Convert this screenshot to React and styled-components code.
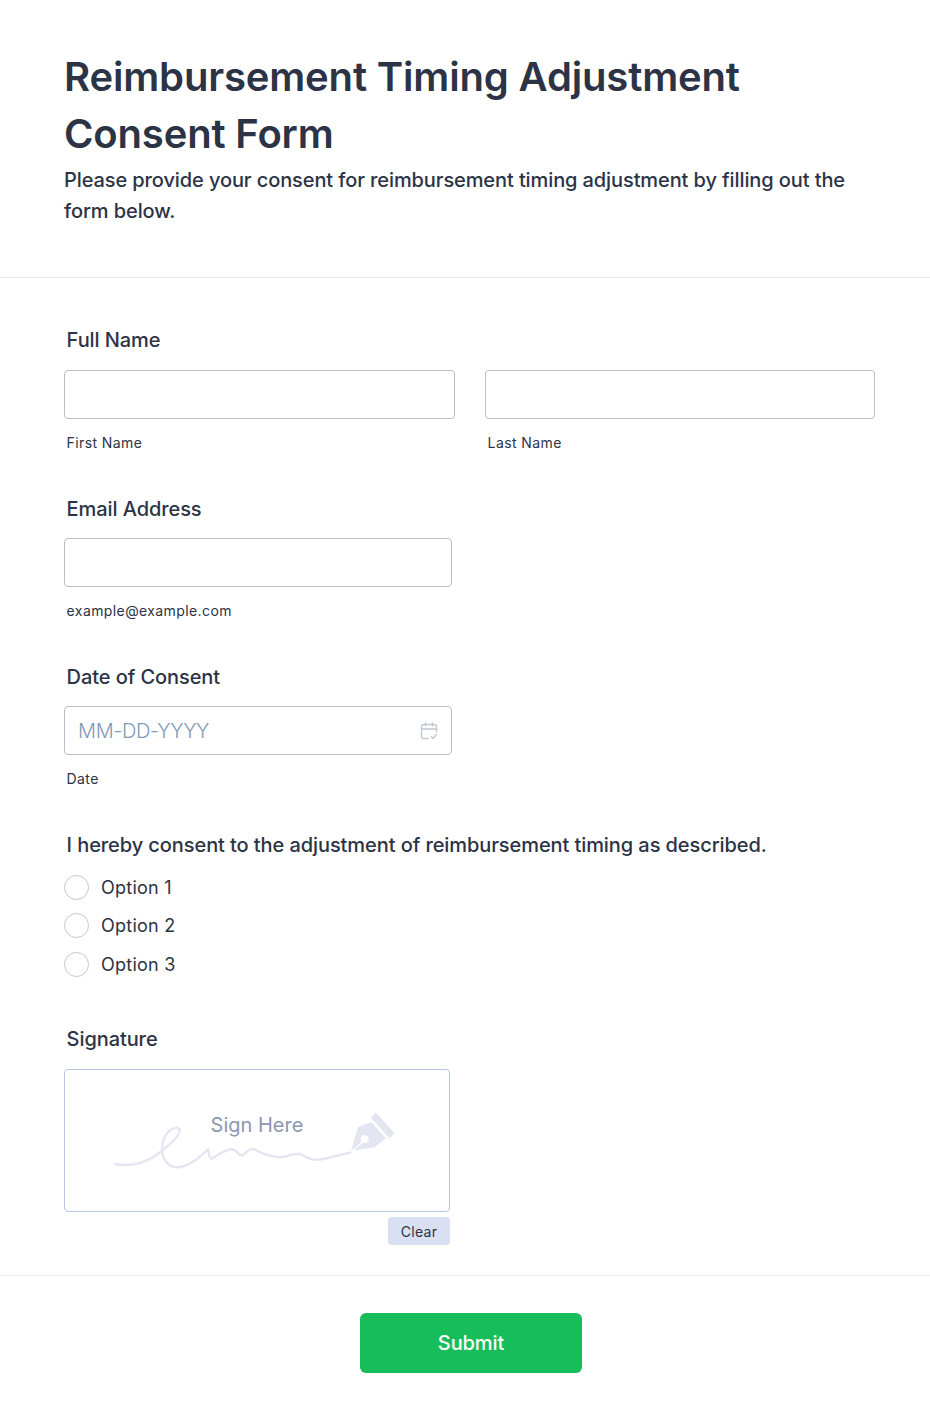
import React from "react";
import styled, { createGlobalStyle } from "styled-components";

const GlobalStyle = createGlobalStyle`
  html, body {
    margin: 0;
    padding: 0;
    background: #fff;
  }
  body {
    font-family: Inter, "Liberation Sans", sans-serif;
    color: #2c3345;
  }
  * {
    box-sizing: border-box;
  }
`;

const Page = styled.div`
  width: 930px;
  height: 1422px;
  background: #fff;
`;

const Header = styled.header`
  height: 278px;
  padding: 48px 64px 0;
  border-bottom: 1px solid #e3e5e8;
`;

const Title = styled.h1`
  margin: 0;
  font-size: 40px;
  font-weight: 600;
  line-height: 57px;
  letter-spacing: -0.16px;
  color: #2c3345;
`;

const Subtitle = styled.p`
  margin: 3px 0 0;
  font-size: 20px;
  font-weight: 500;
  line-height: 31px;
  letter-spacing: -0.1px;
  color: #2c3345;
`;

const Form = styled.form`
  display: flex;
  flex-direction: column;
  padding: 50px 55px 0 64px;
`;

const Field = styled.div`
  display: flex;
  flex-direction: column;
  margin-bottom: ${(p) => p.$bottom || 46}px;
`;

const Label = styled.label`
  display: block;
  margin: 0 0 ${(p) => p.$gap || 17}px 2.6px;
  font-size: 20px;
  font-weight: 500;
  line-height: 24px;
  letter-spacing: -0.08px;
  color: #2c3345;
`;

const InputRow = styled.div`
  display: grid;
  grid-template-columns: 391px 390px;
  column-gap: 30px;
`;

const Col = styled.div`
  display: flex;
  flex-direction: column;
  width: ${(p) => p.$width || "100%"};
`;

const InputBox = styled.div`
  display: flex;
  align-items: center;
  justify-content: space-between;
  height: 49px;
  padding: 0 13px;
  border: 1px solid #b8bdc9;
  border-radius: 4px;
  background: #fff;
`;

const Placeholder = styled.span`
  font-size: 20px;
  font-weight: 300;
  letter-spacing: -0.35px;
  color: #7f9ab5;
`;

const SubLabel = styled.span`
  margin: 16px 0 0 2.6px;
  font-size: 14px;
  line-height: 16px;
  letter-spacing: 0.4px;
  color: #2c3345;
`;

const Options = styled.div`
  display: flex;
  flex-direction: column;
  gap: 13.4px;
  margin-top: 1px;
`;

const Option = styled.div`
  display: flex;
  align-items: center;
  gap: 12px;
  height: 25px;
  font-size: 18px;
  letter-spacing: 0.25px;
  color: #2c3345;
`;

const Radio = styled.span`
  width: 25px;
  height: 25px;
  border: 1.5px solid #c3c8d4;
  border-radius: 50%;
  background: #fff;
`;

const SignBox = styled.div`
  position: relative;
  width: 386px;
  height: 143px;
  border: 1px solid #b8c8e4;
  border-radius: 4px;
  background: #fff;
`;

const SignText = styled.span`
  position: absolute;
  top: 42px;
  left: 0;
  right: 0;
  text-align: center;
  font-size: 20px;
  line-height: 26px;
  color: #8b97b3;
`;

const SignArt = styled.svg`
  position: absolute;
  left: 48px;
  top: 40px;
`;

const ClearRow = styled.div`
  display: flex;
  justify-content: flex-end;
  width: 386px;
  margin-top: 5px;
`;

const ClearButton = styled.button`
  width: 62px;
  height: 28px;
  padding: 2px 0 0;
  border: 0;
  border-radius: 4px;
  background: #d9e0f3;
  font-family: inherit;
  font-size: 14px;
  letter-spacing: 0.3px;
  color: #2c3345;
`;

const Footer = styled.div`
  display: flex;
  justify-content: center;
  margin-top: 30px;
  padding: 37px 0 0 12px;
  border-top: 1px solid #e8e8f5;
`;

const SubmitButton = styled.button`
  width: 222px;
  height: 60px;
  border: 0;
  border-radius: 6px;
  background: #18bd5b;
  font-family: inherit;
  font-size: 20px;
  font-weight: 500;
  letter-spacing: -0.1px;
  color: #fff;
`;

const CalendarIcon = () => (
  <svg width="18" height="18" viewBox="0 0 18 18" fill="none" stroke="#c0c8d4" strokeWidth="1.4" strokeLinecap="round" strokeLinejoin="round">
    <path d="M8 16.5H3.5A2 2 0 0 1 1.5 14.5V4.5A2 2 0 0 1 3.5 2.5H14.5A2 2 0 0 1 16.5 4.5V10" />
    <path d="M1.5 7H16.5" />
    <path d="M5.5 1V4M12.5 1V4" />
    <path d="M11 14.5L13 16.5L16.5 12.5" />
  </svg>
);

const SignatureArt = () => (
  <SignArt width="290" height="75" viewBox="190 150 870 225" fill="none">
    <path
      d="M197 312C240 320 285 310 320 285C360 255 395 225 390 208C380 195 350 210 340 245C330 290 350 322 385 322C420 320 450 290 475 268C478 280 478 298 488 295C505 285 530 265 550 268C565 272 565 290 580 285C595 275 600 262 615 268C640 285 670 290 690 292C710 292 730 278 750 282C775 295 790 302 815 298C850 292 880 282 903 277"
      stroke="#e3e6f1"
      strokeWidth="7"
      strokeLinecap="round"
    />
    <path d="M905 272L925 200L965 187L1008 235L975 262Z" fill="#e3e6f1" />
    <path d="M978 157L1035 220L1020 235L963 173Z" fill="#e3e6f1" />
    <circle cx="945" cy="237" r="12" fill="#fff" />
    <path d="M905 275L940 245" stroke="#fff" strokeWidth="4" />
  </SignArt>
);

export default function App() {
  return (
    <Page>
      <GlobalStyle />
      <Header>
        <Title>Reimbursement Timing Adjustment Consent Form</Title>
        <Subtitle>
          Please provide your consent for reimbursement timing adjustment by
          filling out the form below.
        </Subtitle>
      </Header>
      <Form>
        <Field>
          <Label $gap={18}>Full Name</Label>
          <InputRow>
            <Col>
              <InputBox />
              <SubLabel>First Name</SubLabel>
            </Col>
            <Col>
              <InputBox />
              <SubLabel>Last Name</SubLabel>
            </Col>
          </InputRow>
        </Field>
        <Field>
          <Label>Email Address</Label>
          <Col $width="388px">
            <InputBox />
            <SubLabel>example@example.com</SubLabel>
          </Col>
        </Field>
        <Field>
          <Label>Date of Consent</Label>
          <Col $width="388px">
            <InputBox>
              <Placeholder>MM-DD-YYYY</Placeholder>
              <CalendarIcon />
            </InputBox>
            <SubLabel>Date</SubLabel>
          </Col>
        </Field>
        <Field $bottom={50}>
          <Label>I hereby consent to the adjustment of reimbursement timing as described.</Label>
          <Options>
            <Option>
              <Radio />
              Option 1
            </Option>
            <Option>
              <Radio />
              Option 2
            </Option>
            <Option>
              <Radio />
              Option 3
            </Option>
          </Options>
        </Field>
        <div>
          <Label $gap={18}>Signature</Label>
          <SignBox>
            <SignText>Sign Here</SignText>
            <SignatureArt />
          </SignBox>
          <ClearRow>
            <ClearButton type="button">Clear</ClearButton>
          </ClearRow>
        </div>
      </Form>
      <Footer>
        <SubmitButton type="button">Submit</SubmitButton>
      </Footer>
    </Page>
  );
}
